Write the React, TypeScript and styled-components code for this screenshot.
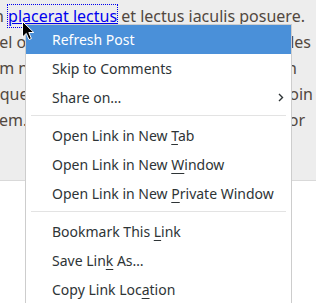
import React from 'react'
import styled, { createGlobalStyle } from 'styled-components'

const GlobalStyle = createGlobalStyle`
  html, body {
    margin: 0;
    padding: 0;
    background: #ffffff;
    overflow: hidden;
  }
`

type Item = { label: React.ReactNode; active?: boolean; sub?: boolean } | 'sep'

const items: Item[] = [
  { label: 'Refresh Post', active: true },
  { label: 'Skip to Comments' },
  { label: 'Share on…', sub: true },
  'sep',
  { label: <>Open Link in New <u>T</u>ab</> },
  { label: <>Open Link in New <u>W</u>indow</> },
  { label: <>Open Link in New <u>P</u>rivate Window</> },
  'sep',
  { label: <>Bookmark This <u>L</u>ink</> },
  { label: <>Save Lin<u>k</u> As…</> },
  { label: <>Copy Link Loc<u>a</u>tion</> },
]

// text lines behind the menu: left part, right part, offsets
const lines = [
  { left: 'vel odio', right: 'sodales', indent: -9, end: 5 },
  { left: 'Nam nec', right: 'in', indent: -22, end: 19 },
  { left: 'atque', right: 'proin', indent: -15, end: 3 },
  { left: 'lorem.', right: 'tempor', indent: -21, end: 11 },
]

export default function App() {
  return (
    <Screen>
      <GlobalStyle />
      <Article>
        <Text>
          <Line $indent={-10}>
            <span>Nam vitae enim at metus nunc et semper lacinia</span>
          </Line>
          <Line $indent={-6}>
            <span>
              n <Link href="#">placerat lectus</Link> et lectus iaculis posuere.
            </span>
          </Line>
          {lines.map((l, i) => (
            <Line key={i} $indent={l.indent} $end={l.end}>
              <span>{l.left}</span>
              <span>{l.right}</span>
            </Line>
          ))}
        </Text>
      </Article>

      <Menu>
        {items.map((it, i) =>
          it === 'sep' ? (
            <Separator key={i} />
          ) : (
            <MenuItem key={i} $active={it.active}>
              <span>{it.label}</span>
              {it.sub && (
                <svg width="6" height="9" viewBox="0 0 6 9">
                  <path d="M1 1 L4.5 4.5 L1 8" fill="none" stroke="#2e3436" strokeWidth="1.4" />
                </svg>
              )}
            </MenuItem>
          )
        )}
      </Menu>

      <Cursor width="13" height="20" viewBox="0 0 13 20">
        <path
          d="M0.5 0.5 L0.5 16 L4.3 12.4 L7 18.6 L9.4 17.5 L6.8 11.5 L11.8 11.5 Z"
          fill="#000"
          stroke="#fff"
          strokeWidth="1"
          strokeLinejoin="round"
        />
      </Cursor>
    </Screen>
  )
}

const Screen = styled.div`
  position: relative;
  width: 316px;
  height: 303px;
  overflow: hidden;
  background: #ffffff;
`

const Article = styled.div`
  height: 180px;
  background: #ededed;
  border-bottom: 1px solid #d9d9d9;
  overflow: hidden;
`

const Text = styled.div`
  margin-top: -23.5px;
  font-family: 'Noto Sans', 'Open Sans', sans-serif;
  font-size: 16px;
  line-height: 26px;
  color: #524840;
`

const Line = styled.div<{ $indent: number; $end?: number }>`
  display: flex;
  justify-content: space-between;
  white-space: nowrap;
  margin-left: ${(p) => p.$indent}px;
  padding-right: ${(p) => p.$end ?? 0}px;
`

const Link = styled.a`
  color: #0000ee;
  text-decoration: underline;
  outline: 1px dotted #0000ee;
`

const Menu = styled.div`
  position: absolute;
  left: 25px;
  top: 24px;
  width: 267px;
  box-sizing: border-box;
  background: #ffffff;
  border: 1px solid #cdcdcd;
  font-family: 'Noto Sans', 'Open Sans', sans-serif;
  font-size: 14px;
  color: #2e3436;
  z-index: 2;
`

const MenuItem = styled.div<{ $active?: boolean }>`
  height: 29px;
  display: flex;
  align-items: center;
  justify-content: space-between;
  padding: 0 7px 0 26px;
  background: ${(p) => (p.$active ? '#4a90d9' : 'transparent')};
  color: ${(p) => (p.$active ? '#ffffff' : '#2e3436')};

  u {
    text-underline-offset: 3px;
    text-decoration-thickness: 1px;
  }
`

const Separator = styled.div`
  height: 1px;
  margin: 3px 5px 5px;
  background: #e3e3e3;
`

const Cursor = styled.svg`
  position: absolute;
  left: 22px;
  top: 21px;
  z-index: 3;
`
